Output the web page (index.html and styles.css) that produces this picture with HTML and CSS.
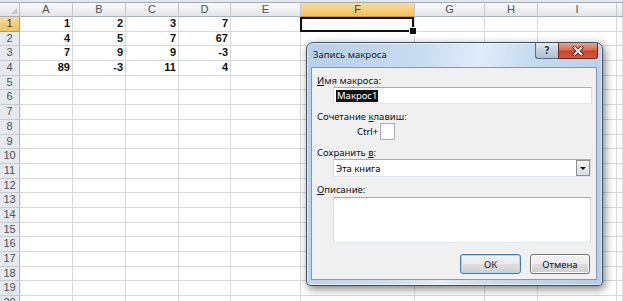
FILE: index.html
```html
<!DOCTYPE html>
<html lang="ru">
<head>
  <meta charset="UTF-8" />
  <title>Запись макроса</title>
  <link rel="stylesheet" href="styles.css">
</head>
<body>
<div class="screen">
  <div class="topbar"></div>
  <div class="grid">
    <div class="corner"></div><div class="ch">A</div><div class="ch">B</div><div class="ch">C</div><div class="ch">D</div><div class="ch">E</div><div class="ch sel">F</div><div class="ch">G</div><div class="ch">H</div><div class="ch">I</div><div class="ch"></div>
    <div class="rh sel">1</div><div class="num">1</div><div class="num">2</div><div class="num">3</div><div class="num">7</div><div></div><div class="active"></div><div></div><div></div><div></div><div></div>
    <div class="rh">2</div><div class="num">4</div><div class="num">5</div><div class="num">7</div><div class="num">67</div><div></div><div></div><div></div><div></div><div></div><div></div>
    <div class="rh">3</div><div class="num">7</div><div class="num">9</div><div class="num">9</div><div class="num">-3</div><div></div><div></div><div></div><div></div><div></div><div></div>
    <div class="rh">4</div><div class="num">89</div><div class="num">-3</div><div class="num">11</div><div class="num">4</div><div></div><div></div><div></div><div></div><div></div><div></div>
    <div class="rh">5</div><div></div><div></div><div></div><div></div><div></div><div></div><div></div><div></div><div></div><div></div>
    <div class="rh">6</div><div></div><div></div><div></div><div></div><div></div><div></div><div></div><div></div><div></div><div></div>
    <div class="rh">7</div><div></div><div></div><div></div><div></div><div></div><div></div><div></div><div></div><div></div><div></div>
    <div class="rh">8</div><div></div><div></div><div></div><div></div><div></div><div></div><div></div><div></div><div></div><div></div>
    <div class="rh">9</div><div></div><div></div><div></div><div></div><div></div><div></div><div></div><div></div><div></div><div></div>
    <div class="rh">10</div><div></div><div></div><div></div><div></div><div></div><div></div><div></div><div></div><div></div><div></div>
    <div class="rh">11</div><div></div><div></div><div></div><div></div><div></div><div></div><div></div><div></div><div></div><div></div>
    <div class="rh">12</div><div></div><div></div><div></div><div></div><div></div><div></div><div></div><div></div><div></div><div></div>
    <div class="rh">13</div><div></div><div></div><div></div><div></div><div></div><div></div><div></div><div></div><div></div><div></div>
    <div class="rh">14</div><div></div><div></div><div></div><div></div><div></div><div></div><div></div><div></div><div></div><div></div>
    <div class="rh">15</div><div></div><div></div><div></div><div></div><div></div><div></div><div></div><div></div><div></div><div></div>
    <div class="rh">16</div><div></div><div></div><div></div><div></div><div></div><div></div><div></div><div></div><div></div><div></div>
    <div class="rh">17</div><div></div><div></div><div></div><div></div><div></div><div></div><div></div><div></div><div></div><div></div>
    <div class="rh">18</div><div></div><div></div><div></div><div></div><div></div><div></div><div></div><div></div><div></div><div></div>
    <div class="rh">19</div><div></div><div></div><div></div><div></div><div></div><div></div><div></div><div></div><div></div><div></div>
    <div class="rh">20</div><div></div><div></div><div></div><div></div><div></div><div></div><div></div><div></div><div></div><div></div>
  </div>

  <div class="dialog">
    <div class="titlebar">
      <span class="title">Запись макроса</span>
      <div class="caption-btns">
        <span class="cbtn help">?</span>
        <span class="cbtn close">
          <svg width="12" height="10" viewBox="0 0 12 10">
            <path d="M2.5 1.5 L9.5 8.5 M9.5 1.5 L2.5 8.5" stroke="#5a1d14" stroke-width="3.6" stroke-linecap="square"/>
            <path d="M2.5 1.5 L9.5 8.5 M9.5 1.5 L2.5 8.5" stroke="#fff" stroke-width="1.8" stroke-linecap="square"/>
          </svg>
        </span>
      </div>
    </div>
    <div class="client">
      <div class="label"><u>И</u>мя макроса:</div>
      <div class="field name"><span class="hl">Макрос1</span></div>
      <div class="label">Сочетание <u>к</u>лавиш:</div>
      <div class="shortcut"><span>Ctrl+</span><span class="keybox"></span></div>
      <div class="label">Сохранить <u>в</u>:</div>
      <div class="field select"><span class="value">Эта книга</span><span class="drop"></span></div>
      <div class="label"><u>О</u>писание:</div>
      <div class="field memo"></div>
      <div class="buttons">
        <button class="btn default">ОК</button>
        <button class="btn">Отмена</button>
      </div>
    </div>
  </div>
</div>
</body>
</html>
```

FILE: styles.css
```css
* {
  box-sizing: border-box;
}
html, body {
  margin: 0;
  padding: 0;
}
body {
  background: #fff;
  font-family: "Liberation Sans", Arial, sans-serif;
}
.screen {
  position: relative;
  width: 623px;
  height: 301px;
  overflow: hidden;
}
.topbar {
  height: 3px;
  background: #e3e6ea;
  border-bottom: 1px solid #a3abb5;
}

/* sheet */
.grid {
  display: grid;
  grid-template-columns: 20px 53px 53px 53px 52px 70px 114px 70px 53px 79px 1fr;
  grid-template-rows: 14px;
  grid-auto-rows: 14.7px;
}
.grid > div {
  border-right: 1px solid #d6d8da;
  border-bottom: 1px solid #d6d8da;
  font-size: 11px;
  line-height: 13.7px;
}
.grid > .corner {
  position: relative;
  background: linear-gradient(#f7f8f9, #e2e5e9);
  border-right: 1px solid #b9bfc7;
  border-bottom: 1px solid #a9b1bb;
}
.corner::after {
  content: "";
  position: absolute;
  right: 2px;
  bottom: 2px;
  border-left: 6px solid transparent;
  border-bottom: 6px solid #c4c9cf;
}
.grid > .ch {
  background: linear-gradient(#f8f9fa, #e3e6ea);
  border-right: 1px solid #c4c9d0;
  border-bottom: 1px solid #a9b1bb;
  color: #4b525b;
  text-align: center;
  line-height: 13px;
}
.grid > .rh {
  background: #e6e9ed;
  border-right: 1px solid #a9b1bb;
  border-bottom: 1px solid #c7ccd2;
  color: #4b525b;
  text-align: center;
  font-size: 11px;
}
.grid > .ch.sel,
.grid > .rh.sel {
  background: linear-gradient(#f9dc9d, #f1c25f);
  border-bottom-color: #c29a45;
  color: #3a3a3a;
}
.grid > .rh.sel {
  border-right-color: #c29a45;
}
.grid > .num {
  text-align: right;
  padding-right: 2px;
  font-weight: bold;
  color: #111;
}
.grid > .active {
  position: relative;
}
.active::after {
  content: "";
  position: absolute;
  left: -1px;
  top: 0;
  right: 0;
  bottom: -1px;
  border: 2px solid #111;
}
.active::before {
  content: "";
  position: absolute;
  right: -3px;
  bottom: -4px;
  width: 6px;
  height: 6px;
  background: #111;
  border: 1px solid #fff;
  z-index: 1;
}

/* dialog */
.dialog {
  position: absolute;
  left: 306px;
  top: 42px;
  width: 297px;
  height: 244px;
  display: flex;
  flex-direction: column;
  padding: 0 5px 5px 4px;
  border: 1px solid #43505e;
  border-radius: 7px 7px 4px 4px;
  background: linear-gradient(100deg, #b8cfea 0%, #c9dcf1 35%, #e2ecf8 52%, #c6daf0 68%, #b5cde9 100%);
  box-shadow: inset 0 0 0 1px rgba(255, 255, 255, 0.55), 2px 3px 9px rgba(0, 0, 0, 0.5);
  font-family: "Noto Sans", "Liberation Sans", sans-serif;
  font-size: 9.5px;
  color: #000;
}
.titlebar {
  height: 24px;
  display: flex;
  justify-content: space-between;
  align-items: flex-start;
}
.title {
  padding: 6px 0 0 2px;
  font-size: 9.5px;
  line-height: 12px;
  color: #1b1b1b;
}
.caption-btns {
  display: flex;
  margin-right: -1px;
}
.cbtn {
  height: 16px;
  display: flex;
  align-items: center;
  justify-content: center;
  border: 1px solid #5f6f82;
  border-top: none;
}
.help {
  width: 23px;
  border-radius: 0 0 0 3px;
  border-right: none;
  background: linear-gradient(#e3eaf3, #c3d0df 50%, #aebfd3);
  font-family: "DejaVu Sans", sans-serif;
  font-size: 10px;
  font-weight: bold;
  color: #2f3a46;
  text-shadow: 0 0 2px #fff;
}
.close {
  width: 40px;
  border-color: #6b2a21;
  border-radius: 0 0 3px 0;
  background: linear-gradient(#e8a697, #d86b55 45%, #c8432c 55%, #d35a3e);
}

.client {
  flex: 1;
  display: flex;
  flex-direction: column;
  padding: 7px 5px 5px 5px;
  background: #f0f0f0;
  border: 1px solid #8797a9;
}
.label {
  line-height: 12px;
  height: 12px;
  color: #111;
}
.label u {
  text-decoration-thickness: 1px;
  text-underline-offset: 1px;
}
.field {
  margin-left: 16px;
  margin-right: -1px;
  background: #fff;
  border: 1px solid;
  border-color: #a6abb3 #d9dce2 #e2e7ed #d9dce2;
}
.name {
  height: 17px;
  padding: 1px 0 0 2px;
}
.hl {
  display: inline-block;
  background: #111;
  color: #fff;
  line-height: 12px;
  padding: 0 1px;
}
.shortcut {
  height: 17px;
  display: flex;
  align-items: center;
  gap: 2px;
  padding-left: 40px;
}
.keybox {
  width: 15px;
  height: 17px;
  background: #fff;
  border: 1px solid #abadb3;
}
.select {
  height: 18px;
  display: flex;
  align-items: center;
  justify-content: space-between;
  padding-left: 2px;
  margin-right: 0;
}
.drop {
  width: 14px;
  height: 16px;
  position: relative;
  border: 1px solid #8e8f8f;
  background: linear-gradient(#f4f4f4, #dcdcdc);
}
.drop::after {
  content: "";
  position: absolute;
  left: 3px;
  top: 6px;
  border-left: 3.5px solid transparent;
  border-right: 3.5px solid transparent;
  border-top: 3px solid #111;
}
.memo {
  height: 46px;
  margin-top: 1px;
  margin-right: 0;
}
.field + .label,
.shortcut + .label {
  margin-top: 7px;
}
.buttons {
  display: flex;
  justify-content: flex-end;
  gap: 9px;
  margin-top: 11px;
  padding-right: 1px;
}
.btn {
  width: 60px;
  height: 20px;
  padding: 0;
  font-family: "Noto Sans", "Liberation Sans", sans-serif;
  font-size: 9.5px;
  color: #111;
  border: 1px solid #707070;
  border-radius: 3px;
  background: linear-gradient(#f3f3f3, #ebebeb 48%, #dddddd 52%, #cfcfcf);
  box-shadow: inset 0 0 0 1px #fcfcfc;
}
.btn.default {
  width: 61px;
  border-color: #3c7fb1;
  box-shadow: inset 0 0 0 1px #a9d8f2;
}
```
